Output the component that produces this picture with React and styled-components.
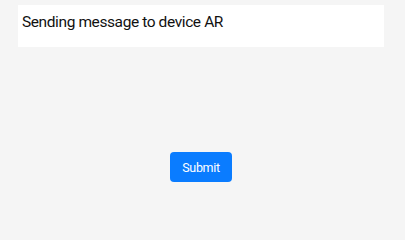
import React from "react";
import styled, { createGlobalStyle } from "styled-components";

const Global = createGlobalStyle`
  html, body {
    margin: 0;
    padding: 0;
    background: #f5f5f5;
    font-family: Roboto, "Liberation Sans", Arial, sans-serif;
    overflow: hidden;
  }
`;

const Page = styled.div`
  width: 405px;
  height: 228px;
  box-sizing: border-box;
  padding: 5px 0 0 18px;
`;

const Column = styled.div`
  width: 366px;
  display: flex;
  flex-direction: column;
  align-items: center;
`;

const MessageBox = styled.div`
  align-self: stretch;
  height: 42px;
  background: #ffffff;
  box-sizing: border-box;
  padding: 6px 4px 0;
  font-size: 15.5px;
  letter-spacing: -0.4px;
  color: #111;
  line-height: 22px;
`;

const SubmitButton = styled.button`
  margin-top: 105px;
  width: 62px;
  height: 30px;
  border: none;
  border-radius: 4px;
  background: #0a7cff;
  color: #ffffff;
  font-family: Roboto, "Liberation Sans", Arial, sans-serif;
  font-size: 12.5px;
  letter-spacing: -0.3px;
  padding: 0;
  cursor: pointer;
`;

export default function App() {
  return (
    <Page>
      <Global />
      <Column>
        <MessageBox>Sending message to device AR</MessageBox>
        <SubmitButton>Submit</SubmitButton>
      </Column>
    </Page>
  );
}
